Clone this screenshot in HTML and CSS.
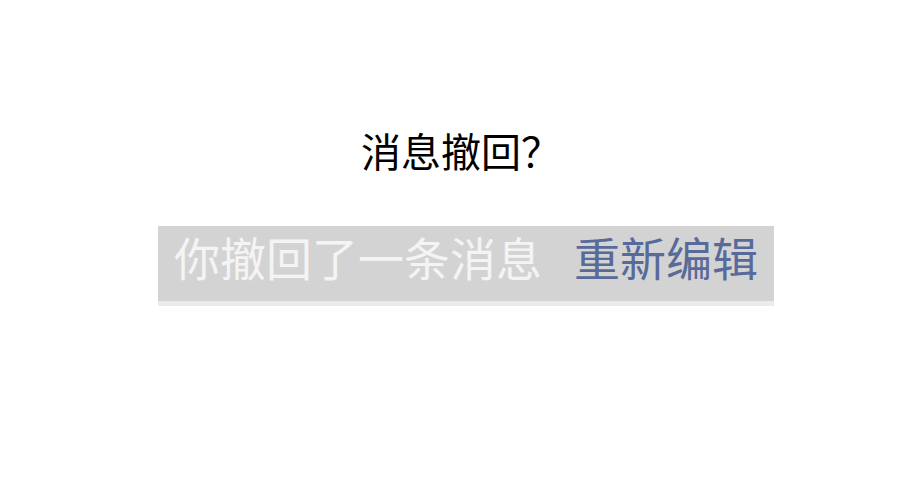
FILE: index.html
```html
<!DOCTYPE html>
<html lang="zh-CN">
<head>
<meta charset="utf-8">
<link rel="stylesheet" href="styles.css">
</head>
<body>
<main class="page">
  <h1 class="title">消息撤回？</h1>
  <div class="notice">
    <div class="notice-bar">
      <span class="notice-text">你撤回了一条消息</span><span class="notice-link">重新编辑</span>
    </div>
    <div class="notice-strip"></div>
  </div>
</main>
</body>
</html>
```
FILE: styles.css
```css
html, body {
  margin: 0;
  padding: 0;
  background: #ffffff;
}
body {
  width: 900px;
  height: 500px;
  overflow: hidden;
  font-family: "Noto Sans CJK SC", "Noto Sans", sans-serif;
}
.page {
  display: flex;
  flex-direction: column;
  padding-top: 127px;
}
.title {
  margin: 0;
  font-family: "Noto Sans", "Noto Sans CJK SC", sans-serif;
  font-size: 40px;
  font-weight: 400;
  line-height: 50px;
  color: #000000;
  text-align: center;
  padding-left: 22px;
}
.notice {
  margin-top: 49px;
  margin-left: 158px;
  width: 616px;
}
.notice-bar {
  height: 75px;
  background: #d3d3d3;
  display: flex;
  align-items: flex-start;
  padding: 7px 0 0 16px;
  box-sizing: border-box;
  font-size: 46px;
  line-height: 1;
  white-space: nowrap;
}
.notice-text {
  color: #f4f4f4;
}
.notice-link {
  color: #586a9a;
  margin-left: 32px;
}
.notice-strip {
  height: 5px;
  background: #ebebeb;
}
```
